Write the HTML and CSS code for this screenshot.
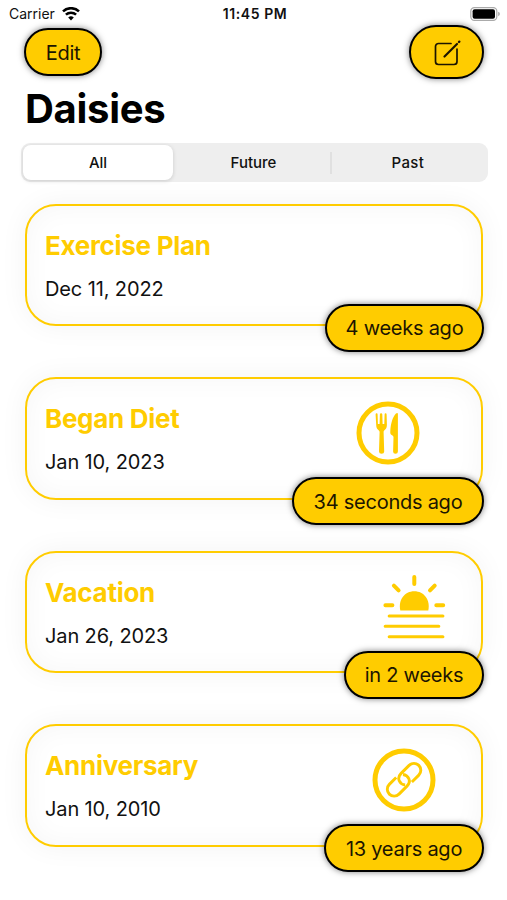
FILE: index.html
```html
<!DOCTYPE html>
<html lang="en">
<head>
    <meta charset="UTF-8">
    <meta name="viewport" content="width=device-width, initial-scale=1.0">
    <title>Daisies</title>
    <link rel="stylesheet" href="styles.css">
</head>
<body>
    <div class="status-bar">
        <div class="carrier">
            <span>Carrier</span>
            <svg width="18" height="14" viewBox="0 0 18 14" fill="none" stroke="#000" stroke-width="2.5">
                <path d="M1 4.400a11.500 11.500 0 0 1 16 0"/>
                <path d="M3.900 7.700a7.400 7.400 0 0 1 10.200 0"/>
                <path d="M9 13.400 6.200 10.500a4 4 0 0 1 5.600 0z" fill="#000" stroke="none"/>
            </svg>
        </div>
        <div class="time">11:45 PM</div>
        <div class="battery">
            <svg width="31" height="14" viewBox="0 0 31 14">
                <rect x=".8" y=".6" width="26" height="12.8" rx="3.6" fill="#fff" stroke="#aaa" stroke-width="1.2"/>
                <rect x="2.6" y="2.3" width="22.4" height="9.4" rx="2" fill="#000"/>
                <path d="M28.3 4.8v4.4a2.4 2.4 0 0 0 0-4.4z" fill="#999"/>
            </svg>
        </div>
    </div>

    <div class="toolbar">
        <button class="pill edit">Edit</button>
        <button class="pill compose" aria-label="New">
            <svg width="28" height="28" viewBox="0 0 28 28" fill="none" stroke="#1c1500" stroke-width="1.7" stroke-linecap="round">
                <path d="M18 4.500H5.500a3 3 0 0 0-3 3V22.500a3 3 0 0 0 3 3H21a3 3 0 0 0 3-3V10"/>
                <path d="M11.500 17.500 24 5" stroke-width="2.200"/>
                <path d="M26 3l.3-.3" stroke-width="2.400"/>
            </svg>
        </button>
    </div>

    <h1>Daisies</h1>

    <div class="tabs">
        <div class="tab active">All</div>
        <div class="tab">Future</div>
        <div class="tab last">Past</div>
    </div>

    <div class="list">
        <div class="card">
            <div class="info">
                <h2>Exercise Plan</h2>
                <p>Dec 11, 2022</p>
            </div>
            <div class="side">
                <div class="icon"></div>
                <div class="pill badge weeks">4 weeks ago</div>
            </div>
        </div>

        <div class="card">
            <div class="info">
                <h2>Began Diet</h2>
                <p>Jan 10, 2023</p>
            </div>
            <div class="side">
                <svg class="icon" viewBox="0 0 64 64" fill="#fc0">
                    <circle cx="32" cy="32" r="29" fill="none" stroke="#fc0" stroke-width="5"/>
                    <path d="M19.6 13.5q0-1.2 1-1.2t1 1.2l.3 9.500h1.700l.3-9.700q.1-1.100 1.200-1.100t1.200 1.100l.3 9.700h1.700l.3-9.500q0-1.200 1-1.200t1 1.200l.3 10.500c0 3.200-1.300 4.300-2.700 5.400q-.7.600-.6 1.600l.6 19.500q0 2.200-2.600 2.200t-2.600-2.200l.6-19.500q0-1-.7-1.600c-1.500-1.100-2.700-2.200-2.700-5.400z"/>
                    <path d="M41.900 13.300V50.500q0 2.200-2.400 2.200t-2.400-2.200l.4-14.200q0-1.200-1-1.700c-2-.9-2.400-2-2.200-4.600.5-7.500 2.200-13.600 5.400-17.200q2.200-1.700 2.200.5z"/>
                </svg>
                <div class="pill badge seconds">34 seconds ago</div>
            </div>
        </div>

        <div class="card">
            <div class="info">
                <h2>Vacation</h2>
                <p>Jan 26, 2023</p>
            </div>
            <div class="side">
                <svg class="icon" viewBox="0 0 64 64" fill="none" stroke="#fc0" stroke-linecap="round">
                    <path d="M18.300 35.500C16 25 22.500 16.300 32.300 16.300S48.500 25 46.300 35.500z" fill="#fc0" stroke="none"/>
                    <path d="M32.300 2v7M11.900 10.600l4.700 4.700M52.700 10.600 48 15.300M3.400 30.200h7M54.300 30.200h6.900" stroke-width="4"/>
                    <path d="M7.200 41h53.700M3.200 51.300h53.600M7.200 61.700h53.700" stroke-width="3.100"/>
                </svg>
                <div class="pill badge future">in 2 weeks</div>
            </div>
        </div>

        <div class="card">
            <div class="info">
                <h2>Anniversary</h2>
                <p>Jan 10, 2010</p>
            </div>
            <div class="side">
                <svg class="icon" viewBox="0 0 64 64" fill="none" stroke="#fc0">
                    <circle cx="32" cy="32" r="29" stroke-width="5"/>
                    <path d="M24.200 29.500 17.300 36.400a6.800 6.800 0 0 0 9.700 9.700l8-8c4.800-4.900 1.500-10.800-4-11.600" stroke-width="2.900"/>
                    <path d="M39.900 34 46.800 27.100a6.800 6.800 0 0 0-9.700-9.700l-8 8c-4.800 4.900-1.500 10.800 4 11.600" stroke-width="2.900"/>
                </svg>
                <div class="pill badge years">13 years ago</div>
            </div>
        </div>
    </div>
</body>
</html>
```

FILE: styles.css
```css
* {
    box-sizing: border-box;
}
body {
    margin: 0;
    height: 900px;
    overflow: hidden;
    background: #fff;
    color: #111;
    font-family: Inter, "Liberation Sans", sans-serif;
}
h1, h2, p {
    margin: 0;
}
svg {
    display: block;
}

.status-bar {
    display: grid;
    grid-template-columns: 1fr auto 1fr;
    align-items: center;
    height: 25px;
    padding: 2px 6px 0 9px;
    font-size: 14px;
}
.carrier {
    display: flex;
    align-items: center;
    gap: 7px;
}
.time {
    font-weight: 600;
    letter-spacing: 0.6px;
}
.battery {
    justify-self: end;
}

.pill {
    display: flex;
    align-items: center;
    justify-content: center;
    padding: 1px 0 0;
    background: #fc0;
    border: 2px solid #000;
    border-radius: 30px;
    box-shadow: 0 0 6px rgba(0, 0, 0, 0.5);
    color: #1c1500;
    font-family: inherit;
    font-size: 20px;
    letter-spacing: -0.25px;
    white-space: nowrap;
}
.toolbar {
    display: flex;
    align-items: center;
    justify-content: space-between;
    height: 54px;
    padding: 0 23px 0 24px;
}
.edit {
    width: 78px;
    height: 48px;
}
.compose {
    width: 75px;
    height: 54px;
}

h1 {
    height: 60px;
    padding-left: 25px;
    line-height: 60px;
    font-size: 40px;
    font-weight: 700;
    letter-spacing: -0.3px;
    color: #000;
}

.tabs {
    display: grid;
    grid-template-columns: repeat(3, 1fr);
    height: 39px;
    margin: 4px 19px 0 21px;
    padding: 2px;
    background: #eee;
    border-radius: 9px;
    font-size: 15px;
    font-weight: 500;
}
.tab {
    display: flex;
    align-items: center;
    justify-content: center;
    margin-left: -2px;
}
.tab.active {
    width: 150px;
    margin-left: 0;
    background: #fff;
    border-radius: 8px;
    box-shadow: 0 1px 4px rgba(0, 0, 0, 0.15);
}
.tab.last {
    position: relative;
    letter-spacing: 0.3px;
}
.tab.last::before {
    content: "";
    position: absolute;
    left: 0;
    width: 2px;
    height: 22px;
    background: #e0e0e0;
}

.list {
    display: flex;
    flex-direction: column;
    gap: 51px;
    padding: 21.5px 24px 0 25px;
}
.card {
    display: flex;
    justify-content: space-between;
    height: 122.5px;
    border: 2px solid #fc0;
    border-radius: 31px;
    box-shadow: 0 0 28px rgba(0, 0, 0, 0.05), inset 0 0 28px rgba(0, 0, 0, 0.04);
}
.info {
    padding: 22px 0 0 18px;
}
.info h2 {
    line-height: 36px;
    font-size: 26px;
    font-weight: 700;
    letter-spacing: -0.3px;
    color: #fc0;
}
.info p {
    margin-top: 12px;
    line-height: 26px;
    font-size: 20px;
    letter-spacing: -0.12px;
}
.side {
    display: flex;
    flex-direction: column;
    align-items: center;
    margin-right: -3px;
    padding-top: 22px;
}
.icon {
    flex: none;
    width: 64px;
    height: 64px;
}
.badge {
    flex: none;
    height: 48px;
    margin-top: 12px;
}
.weeks {
    width: 159px;
}
.seconds {
    width: 192px;
}
.future {
    width: 140px;
}
.years {
    width: 160px;
}
```
